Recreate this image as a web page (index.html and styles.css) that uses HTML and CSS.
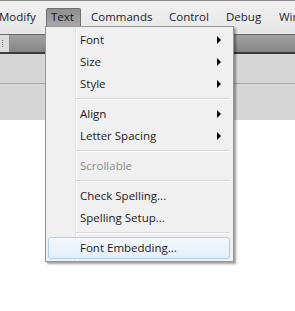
FILE: index.html
```html
<!DOCTYPE html>
<html>
<head>
<meta charset="utf-8">
<link rel="stylesheet" href="styles.css">
</head>
<body>
<div class="app">
  <div class="menubar">
    <span class="mi mi-modify">Modify</span>
    <span class="mi mi-text">Text</span>
    <span class="mi mi-commands">Commands</span>
    <span class="mi mi-control">Control</span>
    <span class="mi mi-debug">Debug</span>
    <span class="mi mi-win">Window</span>
  </div>
  <div class="strip"></div>
  <div class="band"><div class="band-btn"><span class="grip"></span></div></div>
  <div class="panel"></div>
  <div class="canvas"></div>
</div>

<div class="menu">
  <div class="item"><span>Font</span><span class="arrow"></span></div>
  <div class="item"><span>Size</span><span class="arrow"></span></div>
  <div class="item"><span>Style</span><span class="arrow"></span></div>
  <div class="sep"></div>
  <div class="item"><span>Align</span><span class="arrow"></span></div>
  <div class="item"><span>Letter Spacing</span><span class="arrow"></span></div>
  <div class="sep"></div>
  <div class="item disabled"><span>Scrollable</span></div>
  <div class="sep"></div>
  <div class="item"><span>Check Spelling...</span></div>
  <div class="item"><span>Spelling Setup...</span></div>
  <div class="sep"></div>
  <div class="item hot"><span>Font Embedding...</span></div>
</div>
</body>
</html>
```
FILE: styles.css
```css
html, body {
  margin: 0;
  padding: 0;
}
body {
  width: 295px;
  height: 311px;
  overflow: hidden;
  background: #ffffff;
  font-family: "Open Sans", "Noto Sans", sans-serif;
  font-size: 11.5px;
  color: #1b1b1b;
  position: relative;
}
.app {
  display: flex;
  flex-direction: column;
  height: 311px;
}
.menubar {
  display: flex;
  align-items: flex-end;
  height: 25px;
  border-top: 1px solid #8a8a8a;
  background: linear-gradient(#f1f1f1, #e9e9e9);
  margin-left: -6px;
  white-space: nowrap;
  overflow: hidden;
  flex: none;
}
.mi {
  display: block;
  height: 18px;
  line-height: 17px;
  box-sizing: border-box;
  padding-left: 5px;
  flex: none;
  color: #1a2230;
}
.mi-modify { width: 52px; }
.mi-text {
  width: 35px;
  padding-left: 4px;
  background: linear-gradient(#8f8f8f, #a9a9a9);
  border: 1px solid #707070;
  border-bottom: none;
  border-radius: 2px 2px 0 0;
  line-height: 16px;
  color: #10141c;
}
.mi-commands { width: 83px; padding-left: 10px; }
.mi-control { width: 57px; }
.mi-debug { width: 53px; }
.mi-win { width: 40px; }

.strip {
  height: 8px;
  background: #e8e8e8;
  flex: none;
}
.band {
  height: 17px;
  border-top: 1px solid #6a6a6a;
  border-bottom: 2px solid #3c3c3c;
  background: linear-gradient(#a2a2a2, #858585);
  display: flex;
  flex: none;
}
.band-btn {
  width: 9px;
  height: 17px;
  background: #dcdcdc;
  border-right: 1px solid #8c8c8c;
  display: flex;
  align-items: center;
}
.grip {
  width: 2px;
  height: 7px;
  border-right: 1px dotted #777;
}
.panel {
  height: 66px;
  flex: none;
  background: linear-gradient(#d6d6d6 0, #d6d6d6 29px, #acacac 29px, #acacac 30px, #d6d6d6 30px);
}
.canvas {
  flex: 1;
  background: #ffffff;
}

.menu {
  position: absolute;
  left: 45px;
  top: 26px;
  width: 187px;
  padding: 2px 0;
  border: 1px solid #979797;
  background: linear-gradient(to right, #f0f0f0 29px, #e2e3e3 29px, #e2e3e3 30px, #ffffff 30px, #ffffff 31px, #f0f0f0 31px);
  box-shadow: 2px 2px 2px rgba(0, 0, 0, 0.38);
}
.item {
  height: 22px;
  display: flex;
  align-items: center;
  justify-content: space-between;
  padding: 0 12px 1px 34px;
  box-sizing: border-box;
  white-space: nowrap;
}
.arrow {
  width: 0;
  height: 0;
  border-top: 4px solid transparent;
  border-bottom: 4px solid transparent;
  border-left: 4px solid #000;
}
.disabled { color: #8d8d8d; }
.hot {
  margin: 0 3px 0 2px;
  padding-left: 31px;
  border: 1px solid #aecfef;
  border-radius: 3px;
  background: linear-gradient(#f3f8fd, #e4eefb);
  height: 22px;
}
.sep {
  height: 8px;
  margin: 0 3px 0 30px;
  background: linear-gradient(transparent 3px, #d7d7d7 3px, #d7d7d7 4px, #ffffff 4px, #ffffff 5px, transparent 5px);
}
```
